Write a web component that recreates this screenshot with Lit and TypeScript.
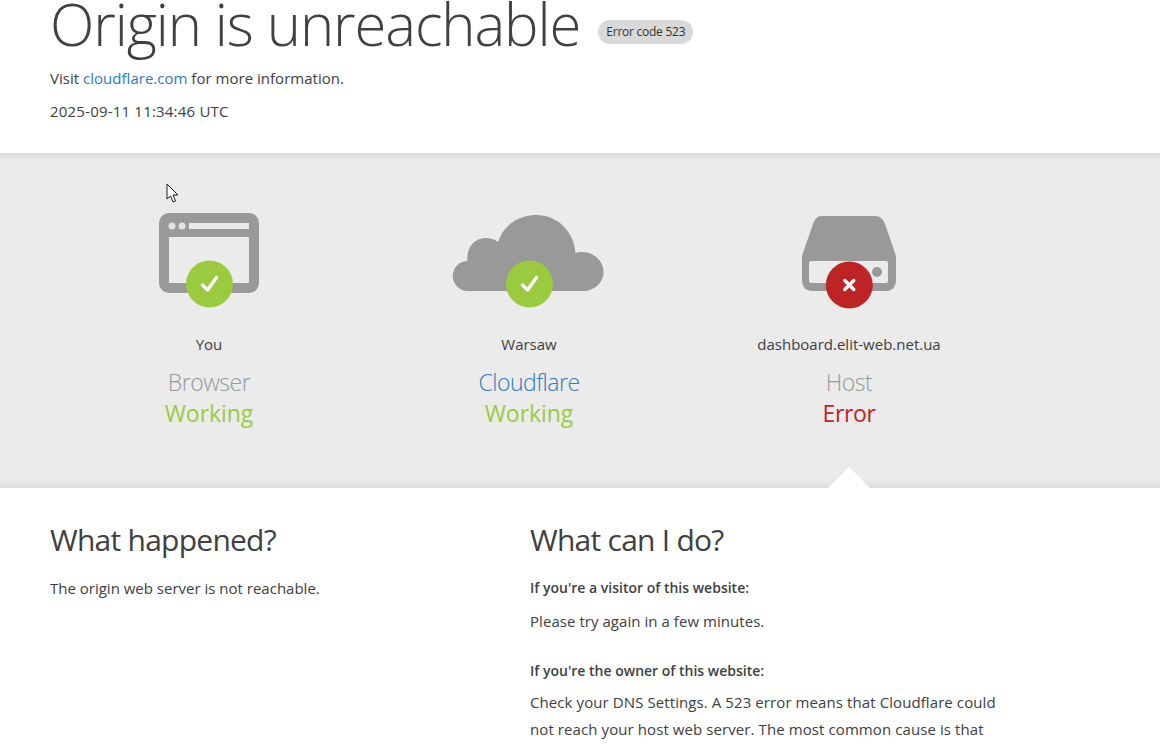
import { LitElement, html, css, svg } from "lit";
import { customElement } from "lit/decorators.js";

const check = svg`<circle cx="23.5" cy="23.5" r="23.5" fill="#9bca3e"/><path d="M16.500 24.500l5 5 9-12.500" fill="none" stroke="#fff" stroke-width="3.400" stroke-linecap="round" stroke-linejoin="round"/>`;
const cross = svg`<circle cx="23.5" cy="23.5" r="23.500" fill="#bd2426"/><path d="M19 19l9 9M28 19l-9 9" fill="none" stroke="#fff" stroke-width="3.400" stroke-linecap="round"/>`;

@customElement("app-root")
export class AppRoot extends LitElement {
  static styles = css`
    :host { display: block; height: 745px; overflow: hidden; background: #fff; color: #404040;
      font-family: "Open Sans", "Noto Sans", sans-serif; font-size: 15px; line-height: 22px; position: relative; }
    a { color: #2f7bbf; text-decoration: none; }
    .wrap { width: 960px; margin-left: 50px; }
    .top { height: 153px; box-sizing: border-box; display: flow-root; }
    .title { display: flex; align-items: center; height: 60px; margin-top: -6px; margin-bottom: 13px; }
    h1 { margin: 0; font-size: 58px; font-weight: 300; line-height: 60px; letter-spacing: -1.1px; color: #404040; white-space: nowrap; }
    .badge { margin-left: 18px; margin-top: 16px; background: #d9d9d9; border-radius: 12px; height: 24px; width: 95px; display: flex; align-items: center; justify-content: center;
      font-size: 12px; font-weight: 400; letter-spacing: -0.25px; color: #333; }
    .line { margin: 0; letter-spacing: 0.02px; }
    .time { margin-top: 11px; letter-spacing: 0.2px; }
    .band { height: 335px; background: #ebebeb; position: relative;
      box-shadow: inset 0 10px 8px -8px rgba(0,0,0,.1), inset 0 -10px 8px -8px rgba(0,0,0,.1); }
    .cols { display: grid; grid-template-columns: repeat(3, 320px); width: 960px; margin-left: 49px; }
    .col { display: flex; flex-direction: column; align-items: center; text-align: center; }
    .icon { height: 110px; margin-top: 60px; width: 100%; display: flex; justify-content: center; }
    .icon > svg { display: block; }
    .name { font-size: 15px; line-height: 22px; margin-top: 10px; color: #404040; }
    .role { font-size: 23px; font-weight: 300; line-height: 30px; margin-top: 12px; letter-spacing: -0.5px; color: #999; }
    .role.blue { color: #2f7bbf; }
    .state { font-size: 23px; font-weight: 400; line-height: 30px; margin-top: 1px; letter-spacing: -0.05px; color: #9bca3e; }
    .state.err { color: #bd2426; letter-spacing: -0.4px; }
    .tip { position: absolute; left: 828px; bottom: 0; width: 42px; height: 21px; }
    .lower { display: grid; grid-template-columns: 480px 480px; padding-top: 30px; }
    h2 { margin: 0; font-size: 30px; font-weight: 400; line-height: 44px; letter-spacing: -0.75px; color: #404040; }
    .lower p { margin: 0; }
    .lead { margin-top: 15px !important; }
    .q { font-weight: 600; font-size: 14px; line-height: 22px; letter-spacing: 0; }
    .a { margin-top: 11px !important; letter-spacing: 0.05px; }
    .q2 { margin-top: 28px !important; }
    .long { width: 475px; line-height: 27px !important; margin-top: 7px !important; letter-spacing: 0.09px; }
    .cursor { position: absolute; left: 166px; top: 183px; }
  `;

  render() {
    return html`
      <div class="top"><div class="wrap">
        <div class="title"><h1>Origin is unreachable</h1><span class="badge">Error code 523</span></div>
        <p class="line">Visit <a href="#">cloudflare.com</a> for more information.</p>
        <p class="line time">2025-09-11 11:34:46 UTC</p>
      </div></div>
      <div class="band">
        <div class="cols">
          <div class="col">
            <div class="icon">
              <svg width="110" height="100" viewBox="0 0 110 100">
                <rect x="5" y="0" width="100" height="80" rx="10" fill="#999"/>
                <circle cx="18" cy="13" r="3.500" fill="#e3e3e3"/><circle cx="28" cy="13" r="3.500" fill="#e3e3e3"/>
                <rect x="35" y="10" width="60" height="6" fill="#ebebeb"/>
                <rect x="15" y="24" width="80" height="46" fill="#ebebeb"/>
                <g transform="translate(32 47.500)">${check}</g>
              </svg>
            </div>
            <div class="name">You</div><div class="role">Browser</div><div class="state">Working</div>
          </div>
          <div class="col">
            <div class="icon">
              <svg width="154" height="100" viewBox="0 0 154 100">
                <path fill="#999" d="M16 78A15 15 0 0 1 15.500 48C14 34 23 25 34 25C38 25 42 26 46 29C51 13 66 2 84 2C105 2 122 18 123.500 40C125 39 128 39 130 39C142 39 151.500 48 151.500 59C151.500 70 142 78 131 78Z"/>
                <g transform="translate(54 47.500)">${check}</g>
              </svg>
            </div>
            <div class="name">Warsaw</div><div class="role blue">Cloudflare</div><div class="state">Working</div>
          </div>
          <div class="col">
            <div class="icon">
              <svg width="96" height="100" viewBox="0 0 96 100">
                <path fill="#999" d="M21 3H74C79 3 82 6 84 11L94 40C95 43 95 44 95 47V67C95 74 91 78 85 78H11C5 78 1 74 1 67V47C1 44 1 43 2 40L12 11C14 6 16 3 21 3Z"/>
                <rect x="8" y="48" width="79" height="22" rx="2" fill="#ebebeb"/>
                <circle cx="76" cy="59" r="5" fill="#999"/>
                <g transform="translate(24.800 48.500)">${cross}</g>
              </svg>
            </div>
            <div class="name">dashboard.elit-web.net.ua</div><div class="role">Host</div><div class="state err">Error</div>
          </div>
        </div>
        <svg class="tip" viewBox="0 0 42 21"><path d="M0 21L21 0L42 21Z" fill="#fff"/></svg>
      </div>
      <div class="wrap lower">
        <div>
          <h2>What happened?</h2>
          <p class="lead">The origin web server is not reachable.</p>
        </div>
        <div>
          <h2>What can I do?</h2>
          <p class="q lead">If you're a visitor of this website:</p>
          <p class="a">Please try again in a few minutes.</p>
          <p class="q q2">If you're the owner of this website:</p>
          <p class="long">Check your DNS Settings. A 523 error means that Cloudflare could not reach your host web server. The most common cause is that</p>
        </div>
      </div>
      <svg class="cursor" width="14" height="21" viewBox="0 0 14 21"><path d="M1 1V16L4.500 13L7 19L9.500 18L7 12H12Z" fill="#fff" stroke="#1a1a2a" stroke-width="1"/></svg>
    `;
  }
}
